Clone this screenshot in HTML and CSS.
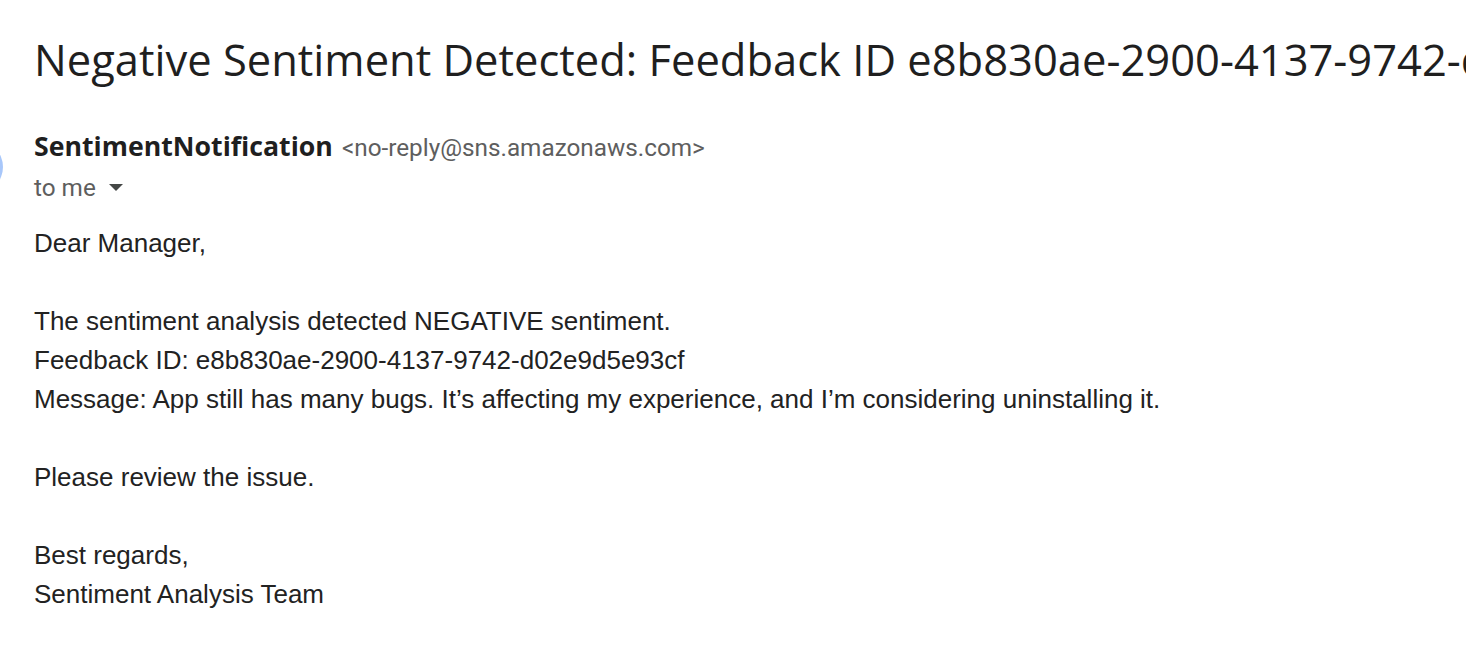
FILE: index.html
```html
<!DOCTYPE html>
<html>
<head>
<meta charset="utf-8">
<link rel="stylesheet" href="styles.css">
</head>
<body>
<div class="page">
  <h1 class="subject">Negative Sentiment Detected: Feedback ID e8b830ae-2900-4137-9742-d02e9d5e93cf</h1>
  <div class="header">
    <div class="avatar"></div>
    <div class="meta">
      <div class="from"><span class="name">SentimentNotification</span><span class="addr">&lt;no-reply@sns.amazonaws.com&gt;</span></div>
      <div class="to">to me <svg class="caret" width="16" height="8" viewBox="0 0 16 8"><path d="M1 0 L15 0 L8 7 Z" fill="#444746"/></svg></div>
    </div>
  </div>
  <div class="body">
    <p>Dear Manager,</p>
    <p>The sentiment analysis detected NEGATIVE sentiment.<br>Feedback ID: e8b830ae-2900-4137-9742-d02e9d5e93cf<br>Message: App still has many bugs. It’s affecting my experience, and I’m considering uninstalling it.</p>
    <p>Please review the issue.</p>
    <p>Best regards,<br>Sentiment Analysis Team</p>
  </div>
</div>
</body>
</html>
```
FILE: styles.css
```css
html, body {
  margin: 0;
  padding: 0;
  background: #ffffff;
  overflow: hidden;
}
.page {
  width: 1466px;
  height: 646px;
  overflow: hidden;
}
.subject {
  margin: 0;
  padding: 30px 0 0 34px;
  font-family: "Open Sans", sans-serif;
  font-weight: 400;
  font-size: 43.5px;
  line-height: 60px;
  color: #1f1f1f;
  white-space: nowrap;
  overflow: hidden;
}
.header {
  display: flex;
  align-items: center;
  gap: 31px;
  margin-top: 36px;
}
.avatar {
  width: 52px;
  height: 52px;
  border-radius: 50%;
  background: #a8c7fa;
  margin-left: -49px;
  flex: none;
}
.meta {
  display: flex;
  flex-direction: column;
}
.from {
  display: flex;
  align-items: baseline;
  gap: 9px;
  line-height: 40px;
  white-space: nowrap;
}
.name {
  font-family: "Open Sans", sans-serif;
  font-weight: 700;
  font-size: 26.7px;
  color: #1f1f1f;
}
.addr {
  font-family: "Roboto", sans-serif;
  font-size: 24.3px;
  color: #5e5e5e;
}
.to {
  font-family: "Roboto", sans-serif;
  font-size: 24.3px;
  color: #5e5e5e;
  line-height: 40px;
  display: flex;
  align-items: center;
  gap: 12px;
}
.body {
  padding: 16px 0 0 34px;
  font-family: "Liberation Sans", Arial, sans-serif;
  font-size: 26px;
  line-height: 39px;
  color: #222222;
}
.body p {
  margin: 0 0 39px 0;
}
```
